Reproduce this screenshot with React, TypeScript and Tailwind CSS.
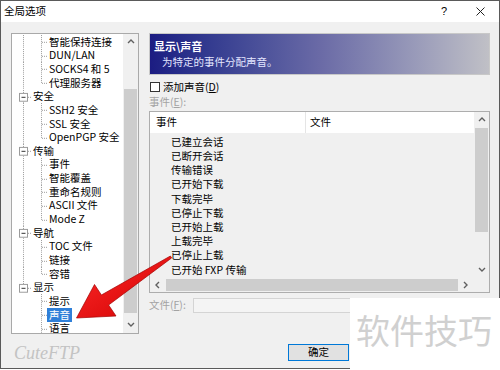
import React from "react"

type TreeItem = {
  label: string
  level: 1 | 2
  last?: boolean // last child of its parent
  end?: boolean // last top-level node
  orphan?: boolean // no outer line (children of last top-level node)
  selected?: boolean
}

const TREE: TreeItem[] = [
  { label: "智能保持连接", level: 2 },
  { label: "DUN/LAN", level: 2 },
  { label: "SOCKS4 和 5", level: 2 },
  { label: "代理服务器", level: 2, last: true },
  { label: "安全", level: 1 },
  { label: "SSH2 安全", level: 2 },
  { label: "SSL 安全", level: 2 },
  { label: "OpenPGP 安全", level: 2, last: true },
  { label: "传输", level: 1 },
  { label: "事件", level: 2 },
  { label: "智能覆盖", level: 2 },
  { label: "重命名规则", level: 2 },
  { label: "ASCII 文件", level: 2 },
  { label: "Mode Z", level: 2, last: true },
  { label: "导航", level: 1 },
  { label: "TOC 文件", level: 2 },
  { label: "链接", level: 2 },
  { label: "容错", level: 2, last: true },
  { label: "显示", level: 1, end: true },
  { label: "提示", level: 2, orphan: true },
  { label: "声音", level: 2, orphan: true, selected: true },
  { label: "语言", level: 2, orphan: true },
]

const EVENTS = [
  "已建立会话",
  "已断开会话",
  "传输错误",
  "已开始下载",
  "下载完毕",
  "已停止下载",
  "已开始上载",
  "上载完毕",
  "已停止上载",
  "已开始 FXP 传输",
]

const DOT = { stroke: "#9a9a9a", strokeWidth: 1, strokeDasharray: "1 1" }

function Connector({ item }: { item: TreeItem }) {
  if (item.level === 1) {
    return (
      <svg width="20" height="13.67" viewBox="0 0 20 14" preserveAspectRatio="none" className="shrink-0">
        <line x1="11.5" y1="0" x2="11.5" y2={item.end ? 7 : 14} {...DOT} />
        <line x1="16" y1="7.5" x2="20" y2="7.5" {...DOT} />
        <rect x="7.5" y="3.5" width="8" height="8" fill="#fff" stroke="#9b9b9b" />
        <line x1="9.5" y1="7.5" x2="13.5" y2="7.5" stroke="#333" />
      </svg>
    )
  }
  return (
    <svg width="35" height="13.67" viewBox="0 0 35 14" preserveAspectRatio="none" className="shrink-0">
      {!item.orphan && <line x1="11.5" y1="0" x2="11.5" y2="14" {...DOT} />}
      <line x1="29.5" y1="0" x2="29.5" y2={item.last ? 7.5 : 14} {...DOT} />
      <line x1="30" y1="7.5" x2="35" y2="7.5" {...DOT} />
    </svg>
  )
}

function Caret({ dir }: { dir: "up" | "down" | "left" | "right" }) {
  const d = {
    up: "M1 5 L4 2 L7 5",
    down: "M1 2 L4 5 L7 2",
    left: "M5 1 L2 4 L5 7",
    right: "M2 1 L5 4 L2 7",
  }[dir]
  return (
    <svg width="8" height="8" viewBox="0 0 8 8">
      <path d={d} fill="none" stroke="#606060" strokeWidth="1.4" />
    </svg>
  )
}

function Tree() {
  return (
    <div className="flex w-[128px] h-[301px] border border-[#a9a9a9] bg-white">
      <div className="flex-1 flex flex-col overflow-hidden pt-[1px]">
        {TREE.map((t) => (
          <div key={t.label} className="flex items-center h-[13.67px] shrink-0 whitespace-nowrap">
            <Connector item={t} />
            <span
              className={
                t.level === 1
                  ? "px-[1px]"
                  : t.selected
                  ? "px-[2px] py-[2px] bg-[#2f7fd8] text-white"
                  : "px-[2px]"
              }
            >
              {t.label}
            </span>
          </div>
        ))}
      </div>
      <div className="flex flex-col w-[15px] bg-[#f0f0f0]">
        <div className="h-[16px] flex items-center justify-center">
          <Caret dir="up" />
        </div>
        <div className="h-[39px]" />
        <div className="h-[224px] mx-[1px] bg-[#cdcdcd]" />
        <div className="flex-1" />
        <div className="h-[16px] flex items-center justify-center">
          <Caret dir="down" />
        </div>
      </div>
    </div>
  )
}

function EventList() {
  return (
    <div className="flex flex-col h-[182px] border border-[#adadad]">
      <div className="flex h-[166px]">
        <div className="flex-1 flex flex-col">
          <div className="flex h-[21px] bg-white items-center">
            <div className="w-[156px] h-full flex items-center pl-[6px] border-r border-[#e5e5e5]">事件</div>
            <div className="pl-[4px]">文件</div>
          </div>
          <div className="flex-1 bg-[#f0f0f0] pt-[2px] pl-[21px] overflow-hidden">
            {EVENTS.map((e) => (
              <div key={e} className="h-[14.2px] flex items-center whitespace-nowrap">
                {e}
              </div>
            ))}
          </div>
        </div>
        <div className="flex flex-col w-[15px] bg-[#f0f0f0]">
          <div className="h-[16px] flex items-center justify-center">
            <Caret dir="up" />
          </div>
          <div className="h-[104px] mx-[1px] bg-[#cdcdcd]" />
          <div className="flex-1" />
          <div className="h-[16px] flex items-center justify-center">
            <Caret dir="down" />
          </div>
        </div>
      </div>
      <div className="flex h-[14px] bg-[#f0f0f0]">
        <div className="w-[16px] flex items-center justify-center">
          <Caret dir="left" />
        </div>
        <div className="flex-1 my-[1px] bg-[#cdcdcd]" />
        <div className="w-[16px] flex items-center justify-center">
          <Caret dir="right" />
        </div>
        <div className="w-[15px]" />
      </div>
    </div>
  )
}

function RightPanel() {
  return (
    <div className="flex flex-col w-[341px]">
      <div className="h-[42px] border border-[#c8c8c8] bg-gradient-to-r from-[#1c1c82] via-[#6a6aa6] to-[#c0c0c6] flex flex-col justify-center gap-[5px]">
        <div className="pl-[4px] font-bold text-white text-[11px]">显示\声音</div>
        <div className="pl-[12px] text-[#e4e6ff]">为特定的事件分配声音。</div>
      </div>
      <div className="flex items-center h-[12px] mt-[6px] pl-[1px] gap-[3px]">
        <div className="w-[10px] h-[10px] border border-[#333] bg-white" />
        <span>
          添加声音(<span className="underline">D</span>)
        </span>
      </div>
      <div className="h-[18px] flex items-center text-[#a3a3a3]">
        事件(<span className="underline">E</span>):
      </div>
      <EventList />
      <div className="flex items-center h-[15px] mt-[5px]">
        <span className="w-[44px] text-[#a3a3a3]">
          文件(<span className="underline">F</span>):
        </span>
        <div className="flex-1 h-full border border-[#d4d4d4] bg-[#f4f4f4]" />
      </div>
    </div>
  )
}

function Arrow() {
  return (
    <svg className="absolute left-0 top-0 pointer-events-none" width="500" height="370" viewBox="0 0 500 370">
      <defs>
        <linearGradient id="ar" x1="0" y1="0" x2="1" y2="1">
          <stop offset="0" stopColor="#ff2b2b" />
          <stop offset="1" stopColor="#d00000" />
        </linearGradient>
      </defs>
      <polygon
        points="171.6,258 108.6,305 116,316 76.5,318 94.5,284.5 101.4,295 170.4,256"
        fill="url(#ar)"
        stroke="#a40000"
        strokeWidth="0.7"
        strokeLinejoin="round"
      />
    </svg>
  )
}

export default function App() {
  return (
    <div className="relative w-[500px] h-[370px] bg-white overflow-hidden font-['Noto_Sans_CJK_SC',sans-serif] text-[10.5px] leading-none text-black">
      <div className="flex flex-col w-[500px] h-[369px] border border-[#5a5a5a]">
        <div className="flex items-center h-[21px] bg-white pl-[3px] pr-[14px]">
          <span>全局选项</span>
          <span className="ml-auto mr-[29px] text-[11px] font-['Liberation_Sans',sans-serif]">?</span>
          <svg width="9" height="9" viewBox="0 0 9 9">
            <path d="M0.5 0.5 L8.5 8.5 M8.5 0.5 L0.5 8.5" stroke="#222" strokeWidth="1" />
          </svg>
        </div>
        <div className="flex-1 flex flex-col bg-[#f0f0f0] pt-[11px] pl-[10px]">
          <div className="flex gap-[10px] h-[301px]">
            <Tree />
            <RightPanel />
          </div>
          <div className="flex items-center h-[17px] mt-[10px] pr-[150px]">
            <span className="pl-[3px] font-['Liberation_Serif',serif] italic text-[18px] text-[#c3c3c3]">CuteFTP</span>
            <div className="ml-auto w-[61px] h-[17px] border border-[#0078d7] bg-[#e1e1e1] flex items-center justify-center">
              确定
            </div>
          </div>
        </div>
      </div>
      <Arrow />
      <div className="absolute right-0 bottom-0 w-[150px] h-[72px] bg-white flex items-center pl-[6px] pb-[8px] text-[34px] text-[#d0d0d0]">
        软件技巧
      </div>
    </div>
  )
}
